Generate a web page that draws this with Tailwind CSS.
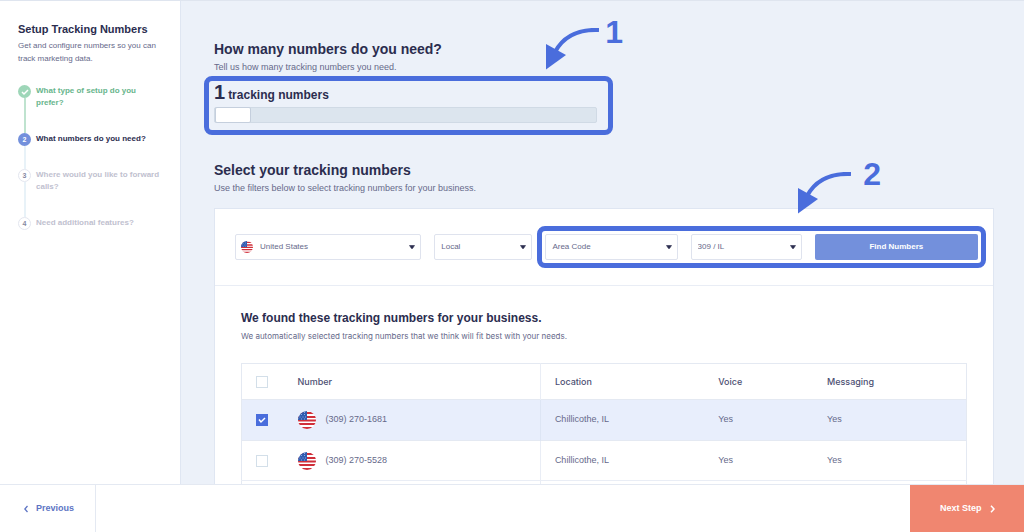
<!DOCTYPE html>
<html lang="en">

<head>
    <meta charset="UTF-8">
    <meta name="viewport" content="width=device-width, initial-scale=1.0">
    <title>Setup Tracking Numbers</title>
    <script src="https://cdn.jsdelivr.net/npm/@tailwindcss/browser@4"></script>
</head>

<body class="flex h-screen flex-col overflow-hidden border-t border-[#dfe5ef] bg-white font-['Liberation_Sans',sans-serif] text-[#66698a]">
    <!-- Shared icons -->
    <svg class="hidden">
        <symbol id="flag-us" viewBox="0 0 18 18">
            <rect width="18" height="18" fill="#fff" />
            <path d="M0 1h18v2H0zM0 5h18v2H0zM0 8.500h18v2H0zM0 12h18v2H0zM0 16h18v2H0z" fill="#d02f3a" />
            <path d="M0 0h9v9H0z" fill="#2f5bb0" />
            <path d="M3 3.500h1M6 3.500h1M1.500 6h1M4.500 6h1M7 6h1M3 8h1M6 8h1M6 1.500h1" stroke="#8fabe0" stroke-width="1" />
        </symbol>
        <symbol id="caret" viewBox="0 0 6 4">
            <path d="M.5 .5h5L3.500 3.500h-1z" fill="#2b2d4f" stroke="#2b2d4f" stroke-width=".6" stroke-linejoin="round" />
        </symbol>
        <symbol id="arrow" viewBox="0 0 54 42">
            <path d="M54 2C33 1 18 9 10 24" fill="none" stroke="#4a6ddc" stroke-width="4" />
            <path d="M1 16l20 11L1 41.500z" fill="#4a6ddc" />
        </symbol>
    </svg>

    <div class="flex min-h-0 flex-1">
        <!-- Sidebar -->
        <aside class="w-[181px] shrink-0 border-r border-[#dfe6f2] px-[18px] pt-5">
            <h1 class="text-[11px] leading-4 font-semibold whitespace-nowrap text-[#2b2d4f]">Setup Tracking Numbers</h1>
            <p class="mt-[2px] text-[8px] leading-[13px]">Get and configure numbers so you can track marketing data.</p>

            <ol class="mt-5 text-[8px] leading-3 font-semibold">
                <li class="flex gap-[5px]">
                    <div class="flex flex-col items-center">
                        <span class="flex size-[13px] items-center justify-center rounded-full bg-[#9ed6b8]">
                            <svg class="size-2" viewBox="0 0 8 8" fill="none" stroke="#fff" stroke-width="1.5"><path d="M1 4l2 2 4-4" /></svg>
                        </span>
                        <span class="w-[2px] flex-1 bg-[#bfe3cf]"></span>
                    </div>
                    <span class="pb-6 text-[#68b58c]">What type of setup do you prefer?</span>
                </li>
                <li class="flex gap-[5px]">
                    <div class="flex flex-col items-center">
                        <span class="flex size-[13px] items-center justify-center rounded-full bg-[#7390dc] text-[7px] text-white">2</span>
                        <span class="w-[2px] flex-1 bg-[#e8f2f8]"></span>
                    </div>
                    <span class="pb-6 text-[#2b2d4f]">What numbers do you need?</span>
                </li>
                <li class="flex gap-[5px]">
                    <div class="flex flex-col items-center">
                        <span class="flex size-[13px] items-center justify-center rounded-full border border-[#e3e6ef] text-[7px] text-[#85889f]">3</span>
                        <span class="w-[2px] flex-1 bg-[#e8f2f8]"></span>
                    </div>
                    <span class="pb-6 text-[#bfc1cf]">Where would you like to forward calls?</span>
                </li>
                <li class="flex gap-[5px]">
                    <span class="flex size-[13px] items-center justify-center rounded-full border border-[#e3e6ef] text-[7px] text-[#85889f]">4</span>
                    <span class="text-[#bfc1cf]">Need additional features?</span>
                </li>
            </ol>
        </aside>

        <!-- Content -->
        <main class="min-w-0 flex-1 overflow-hidden bg-[#ecf1f9] pt-[38px] pr-[30px] pl-[33px]">
            <section>
                <h2 class="text-[14px] leading-5 font-semibold text-[#2b2d4f]">How many numbers do you need?</h2>
                <p class="text-[9px] leading-4">Tell us how many tracking numbers you need.</p>

                <div class="relative mt-[7px] w-[383px] max-w-full">
                    <label for="quantity" class="flex items-baseline gap-[3px] leading-5 font-semibold text-[#2b2d4f]">
                        <span class="text-[20px]">1</span>
                        <span class="text-[12px]">tracking numbers</span>
                    </label>
                    <input id="quantity" type="range" min="1" max="10" value="1"
                        class="mt-[2px] block h-4 w-full appearance-none rounded-[2px] border border-[#d0dae5] bg-[#dce5ee] [&::-webkit-slider-thumb]:h-4 [&::-webkit-slider-thumb]:w-9 [&::-webkit-slider-thumb]:appearance-none [&::-webkit-slider-thumb]:rounded-[2px] [&::-webkit-slider-thumb]:border [&::-webkit-slider-thumb]:border-[#c5cfdd] [&::-webkit-slider-thumb]:bg-white">
                    <div class="pointer-events-none absolute -top-[6px] -right-4 -bottom-3 -left-[10px] rounded-lg border-[5px] border-[#4a6ddc]"></div>
                    <div class="pointer-events-none absolute -top-[66px] -right-[26px] flex items-start gap-[6px]">
                        <svg class="mt-3 h-[42px] w-[54px]"><use href="#arrow" /></svg>
                        <span class="text-[32px] leading-8 font-bold text-[#4a6ddc]">1</span>
                    </div>
                </div>
            </section>

            <section class="mt-[37px]">
                <h2 class="text-[14px] leading-5 font-semibold text-[#2b2d4f]">Select your tracking numbers</h2>
                <p class="text-[9px] leading-4">Use the filters below to select tracking numbers for your business.</p>

                <div class="mt-3 border border-[#dfe6f2] bg-white">
                    <!-- Filters -->
                    <form class="grid grid-cols-[186fr_98fr_132fr_111fr_163fr] gap-x-[13px] border-b border-[#e9edf5] pt-[25px] pr-[15px] pb-[25px] pl-5 text-[8px]">
                        <div class="relative">
                            <svg class="absolute top-[7px] left-[6px] size-3 rounded-full"><use href="#flag-us" /></svg>
                            <select aria-label="Country" class="h-[26px] w-full appearance-none rounded-[2px] border border-[#dfe3ee] bg-transparent pl-6">
                                <option>United States</option>
                            </select>
                            <svg class="pointer-events-none absolute top-[11px] right-[6px] h-1 w-[6px]"><use href="#caret" /></svg>
                        </div>
                        <div class="relative">
                            <select aria-label="Number type" class="h-[26px] w-full appearance-none rounded-[2px] border border-[#dfe3ee] pl-[6px]">
                                <option>Local</option>
                                <option>Toll Free</option>
                            </select>
                            <svg class="pointer-events-none absolute top-[11px] right-[6px] h-1 w-[6px]"><use href="#caret" /></svg>
                        </div>
                        <div class="relative col-span-3 grid grid-cols-subgrid">
                            <div class="relative">
                                <select aria-label="Search by" class="h-[26px] w-full appearance-none rounded-[2px] border border-[#dfe3ee] pl-[6px]">
                                    <option>Area Code</option>
                                </select>
                                <svg class="pointer-events-none absolute top-[11px] right-[6px] h-1 w-[6px]"><use href="#caret" /></svg>
                            </div>
                            <div class="relative">
                                <select aria-label="Area code" class="h-[26px] w-full appearance-none rounded-[2px] border border-[#dfe3ee] pl-[6px]">
                                    <option>309 / IL</option>
                                </select>
                                <svg class="pointer-events-none absolute top-[11px] right-[6px] h-1 w-[6px]"><use href="#caret" /></svg>
                            </div>
                            <button type="button" class="h-[26px] rounded-[2px] bg-[#7390dc] font-semibold text-white">Find Numbers</button>
                            <div class="pointer-events-none absolute -inset-2 rounded-lg border-[5px] border-[#4a6ddc]"></div>
                            <div class="pointer-events-none absolute -top-[76px] right-[97px] flex items-start gap-3">
                                <svg class="mt-[14px] h-[42px] w-[54px]"><use href="#arrow" /></svg>
                                <span class="text-[32px] leading-8 font-bold text-[#4a6ddc]">2</span>
                            </div>
                        </div>
                    </form>

                    <!-- Results -->
                    <div class="pt-[22px] pr-[26px] pb-8 pl-[26px]">
                        <h3 class="text-[12px] leading-5 font-semibold text-[#2b2d4f]">We found these tracking numbers for your business.</h3>
                        <p class="font-['Inter',sans-serif] text-[8px] leading-4">We automatically selected tracking numbers that we think will fit best with your needs.</p>

                        <table class="mt-[19px] w-full table-fixed border-collapse border border-[#e4e9f2] text-left text-[9px]">
                            <colgroup>
                                <col class="w-[56px]">
                                <col class="w-[33.5%]">
                                <col class="w-[22.6%]">
                                <col class="w-[15%]">
                                <col>
                            </colgroup>
                            <thead>
                                <tr class="h-9 font-['Inter',sans-serif] text-[#4d5073]">
                                    <th class="pl-[14px]"><input type="checkbox" aria-label="Select all" class="block size-3 appearance-none border border-[#d3dfe9] bg-white"></th>
                                    <th class="border-r border-[#e9edf5] font-medium">Number</th>
                                    <th class="pl-[14px] font-medium">Location</th>
                                    <th class="pl-[14px] font-medium">Voice</th>
                                    <th class="pl-[14px] font-medium">Messaging</th>
                                </tr>
                            </thead>
                            <tbody>
                                <tr class="h-[41px] border-y border-[#e4e9f2] bg-[#e8eefc]">
                                    <td class="pl-[14px]">
                                        <div class="relative size-3">
                                            <input type="checkbox" checked aria-label="Select (309) 270-1681" class="block size-3 appearance-none border border-[#d3dfe9] bg-white checked:border-[#4a6ddc] checked:bg-[#4a6ddc]">
                                            <svg class="pointer-events-none absolute inset-0 size-3" viewBox="0 0 12 12" fill="none" stroke="#fff" stroke-width="1.5"><path d="M3 5.500l2 2.500 4-4" /></svg>
                                        </div>
                                    </td>
                                    <td class="border-r border-[#dde5f4]">
                                        <div class="flex items-center gap-[10px]"><svg class="size-[18px] rounded-full"><use href="#flag-us" /></svg>(309) 270-1681</div>
                                    </td>
                                    <td class="pl-[14px]">Chillicothe, IL</td>
                                    <td class="pl-[14px]">Yes</td>
                                    <td class="pl-[14px]">Yes</td>
                                </tr>
                                <tr class="h-10 border-b border-[#e9edf5]">
                                    <td class="pl-[14px]"><input type="checkbox" aria-label="Select (309) 270-5528" class="block size-3 appearance-none border border-[#d3dfe9] bg-white"></td>
                                    <td class="border-r border-[#e9edf5]">
                                        <div class="flex items-center gap-[10px]"><svg class="size-[18px] rounded-full"><use href="#flag-us" /></svg>(309) 270-5528</div>
                                    </td>
                                    <td class="pl-[14px]">Chillicothe, IL</td>
                                    <td class="pl-[14px]">Yes</td>
                                    <td class="pl-[14px]">Yes</td>
                                </tr>
                                <tr class="h-10">
                                    <td></td>
                                    <td class="border-r border-[#e9edf5]"></td>
                                    <td></td>
                                    <td></td>
                                    <td></td>
                                </tr>
                            </tbody>
                        </table>
                    </div>
                </div>
            </section>
        </main>
    </div>

    <!-- Bottom bar -->
    <footer class="flex h-12 shrink-0 justify-between border-t border-[#e4e9f2] text-[9px] font-semibold">
        <button type="button" class="flex w-24 items-center gap-2 border-r border-[#e4e9f2] pl-6 text-[#5d74c4]">
            <svg class="h-2 w-1" viewBox="0 0 4 8" fill="none" stroke="currentColor" stroke-width="1.3"><path d="M3.500 1L.8 4l2.700 3" /></svg>
            Previous
        </button>
        <button type="button" class="flex w-[114px] items-center gap-2 bg-[#f08670] pl-[30px] text-white">
            Next Step
            <svg class="h-2 w-[5px]" viewBox="0 0 5 8" fill="none" stroke="currentColor" stroke-width="1.5"><path d="M1 .8L4 4 1 7.200" /></svg>
        </button>
    </footer>
</body>

</html>
